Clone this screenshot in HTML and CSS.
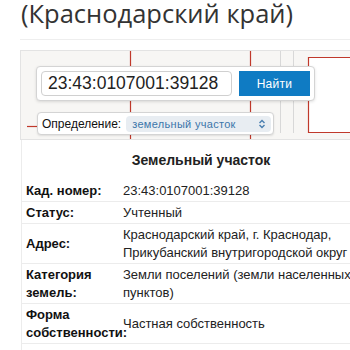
FILE: index.html
```html
<!DOCTYPE html>
<html lang="ru">
<head>
    <meta charset="UTF-8">
    <meta name="viewport" content="width=device-width, initial-scale=1.0">
    <title>Кадастровая карта</title>
    <link rel="stylesheet" href="styles.css">
</head>
<body>

    <div class="page">
        <h1 class="title">(Краснодарский край)</h1>
        <div class="rule"></div>

        <div class="map">
            <!-- границы участков -->
            <svg class="parcels" width="330" height="88" viewBox="0 0 330 88">
                <rect x="287" y="6" width="60" height="75" fill="#fff"/>
                <line x1="259.5" y1="0" x2="259.5" y2="82" stroke="#d8d8d8"/>
                <line x1="272.5" y1="0" x2="272.5" y2="82" stroke="#d8d8d8"/>
                <line x1="109.5" y1="0" x2="109.5" y2="88" stroke="#c0392b" stroke-width="1.2"/>
                <line x1="229.5" y1="0" x2="229.5" y2="88" stroke="#c0392b" stroke-width="1.2"/>
                <polyline points="340,6.5 287.5,6.5 287.5,81.5 340,81.5" fill="none" stroke="#c0392b" stroke-width="1.2"/>
                <line x1="6" y1="75.5" x2="18" y2="75.5" stroke="#c0392b" stroke-width="1.2"/>
            </svg>

            <div class="search">
                <input class="search-input" type="text" value="23:43:0107001:39128">
                <button class="search-btn">Найти</button>
            </div>

            <div class="kind">
                <span class="kind-label">Определение:</span>
                <span class="kind-select">земельный участок
                    <svg width="8" height="10" viewBox="0 0 8 10"><path d="M1.5 4 L4 1.5 L6.5 4 M1.5 6 L4 8.5 L6.5 6" fill="none" stroke="#4a7fb0" stroke-width="1.4"/></svg>
                </span>
            </div>
        </div>

        <div class="info">
            <h2 class="info-title">Земельный участок</h2>
            <table class="info-table">
                <colgroup>
                    <col class="col-label">
                    <col class="col-value">
                </colgroup>
                <tr><th>Кад. номер:</th><td>23:43:0107001:39128</td></tr>
                <tr><th>Статус:</th><td>Учтенный</td></tr>
                <tr><th>Адрес:</th><td>Краснодарский край, г. Краснодар, Прикубанский внутригородской округ</td></tr>
                <tr><th>Категория земель:</th><td>Земли поселений (земли населенных пунктов)</td></tr>
                <tr><th>Форма собственности:</th><td>Частная собственность</td></tr>
                <tr><th>Кадастровая стоимость:</th><td>1 234 567,89 руб.</td></tr>
            </table>
        </div>
    </div>

</body>
</html>
```

FILE: styles.css
```css
body {
    margin: 0;
    background-color: #fff;
    font-family: 'Liberation Sans', Arial, sans-serif;
    color: #222;
    overflow: hidden;
}

.page {
    padding-left: 20px;
    width: 360px;
}

.title {
    font-family: 'Open Sans', sans-serif;
    font-weight: 400;
    font-size: 25.5px;
    line-height: 27px;
    color: #333;
    margin: 0 0 0 1px;
    white-space: nowrap;
}

.rule {
    height: 1px;
    background-color: #eee;
    margin-top: 12px;
}

.map {
    position: relative;
    height: 88px;
    margin-top: 10px;
    border: 1px solid #e3e3e3;
    border-right: none;
    background-color: #f7f6f4;
}

.parcels {
    position: absolute;
    left: 0;
    top: 0;
}

.search {
    position: absolute;
    left: 15px;
    top: 15px;
    width: 269px;
    display: flex;
    gap: 7px;
    padding: 4px;
    background-color: #fff;
    border: 1px solid #d4d4d4;
    border-radius: 4px;
    box-shadow: 0 1px 3px rgba(0, 0, 0, 0.12);
}

.search-input {
    flex: 1;
    min-width: 0;
    height: 25px;
    box-sizing: border-box;
    border: 1px solid #d0d0d0;
    border-radius: 4px;
    padding: 0 6px;
    font-family: 'Liberation Sans', Arial, sans-serif;
    font-size: 17.5px;
    color: #222;
    outline: none;
}

.search-btn {
    width: 71px;
    height: 25px;
    border: none;
    border-radius: 0;
    background-color: #0f7bc3;
    color: #fff;
    font-family: 'Liberation Sans', Arial, sans-serif;
    font-size: 12px;
    letter-spacing: 0.3px;
}

.kind {
    position: absolute;
    left: 16px;
    top: 61px;
    width: 237px;
    height: 23px;
    display: flex;
    align-items: center;
    gap: 5px;
    padding: 0 2px 0 4px;
    box-sizing: border-box;
    background-color: #fff;
    border: 1px solid #d4d4d4;
    border-radius: 4px;
    box-shadow: 0 1px 2px rgba(0, 0, 0, 0.1);
}

.kind-label {
    font-size: 12px;
    color: #111;
}

.kind-select {
    flex: 1;
    height: 16px;
    display: flex;
    align-items: center;
    justify-content: space-between;
    padding: 0 5px 0 6px;
    background-color: #e8edf2;
    border-radius: 4px;
    font-size: 11px;
    color: #3c76aa;
    letter-spacing: 0.3px;
}

.info {
    border-left: 1px solid #ececec;
    margin-left: 1px;
    padding-top: 11px;
}

.info-title {
    font-size: 14px;
    font-weight: bold;
    text-align: center;
    margin: 0;
    line-height: 18px;
}

.info-table {
    border-collapse: collapse;
    table-layout: fixed;
    margin-top: 11px;
    width: 359px;
    font-size: 13px;
    line-height: 18px;
}

.col-label {
    width: 101px;
}

.info-table th,
.info-table td {
    padding: 2px 0 1px;
    border-bottom: 1px solid #ececec;
    vertical-align: middle;
    text-align: left;
}

.info-table th {
    padding-left: 4px;
    font-weight: bold;
    color: #111;
}

.info-table td {
    color: #222;
    padding-right: 30px;
}
```
